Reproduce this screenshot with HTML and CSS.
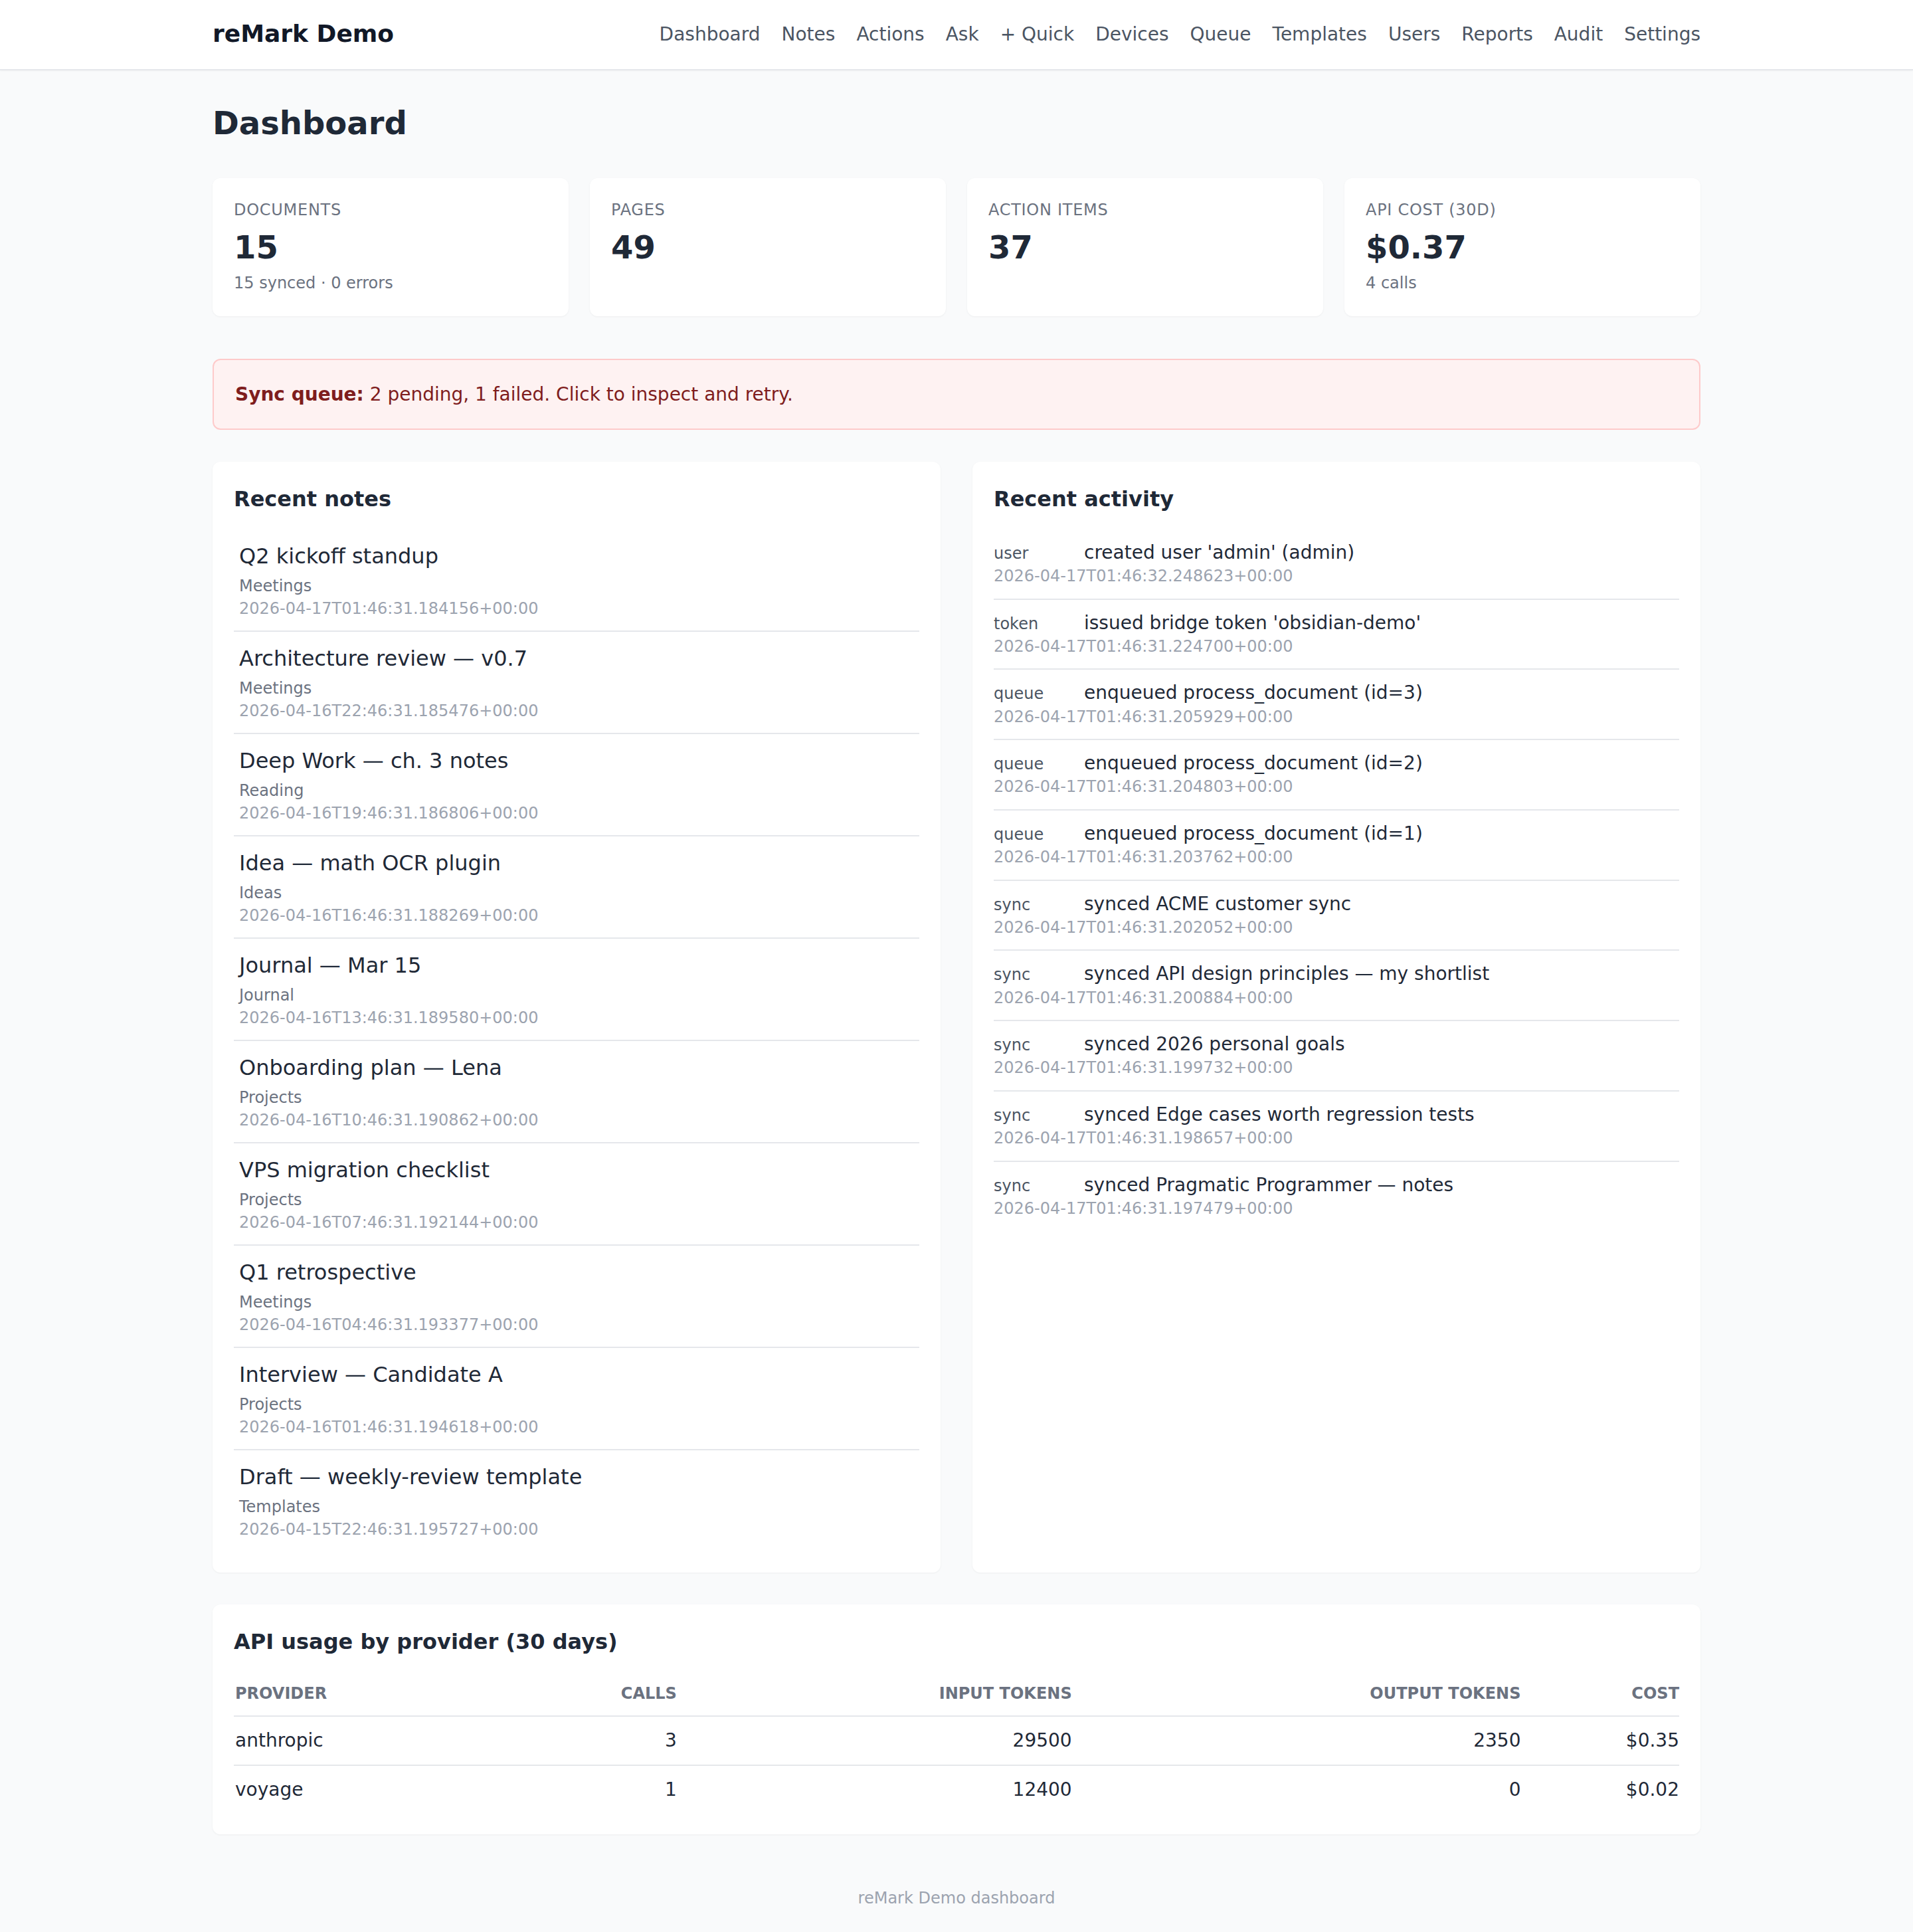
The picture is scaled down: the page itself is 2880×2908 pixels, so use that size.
FILE: index.html
```html
<!DOCTYPE html>
<html lang="en">
<head>
    <meta charset="UTF-8">
    <meta name="viewport" content="width=device-width, initial-scale=1.0">
    <title>reMark Demo — Dashboard</title>
    <link rel="stylesheet" href="styles.css">
</head>
<body>

<header class="topbar">
    <div class="topbar-inner">
        <a href="#" class="brand">reMark Demo</a>
        <nav class="nav">
            <a href="#">Dashboard</a>
            <a href="#">Notes</a>
            <a href="#">Actions</a>
            <a href="#">Ask</a>
            <a href="#">+ Quick</a>
            <a href="#">Devices</a>
            <a href="#">Queue</a>
            <a href="#">Templates</a>
            <a href="#">Users</a>
            <a href="#">Reports</a>
            <a href="#">Audit</a>
            <a href="#">Settings</a>
        </nav>
    </div>
</header>

<main class="page">
    <h1>Dashboard</h1>

    <div class="stats">
        <div class="card stat">
            <div class="stat-label">Documents</div>
            <div class="stat-value">15</div>
            <div class="stat-sub">15 synced · 0 errors</div>
        </div>
        <div class="card stat">
            <div class="stat-label">Pages</div>
            <div class="stat-value">49</div>
        </div>
        <div class="card stat">
            <div class="stat-label">Action items</div>
            <div class="stat-value">37</div>
        </div>
        <div class="card stat">
            <div class="stat-label">API cost (30d)</div>
            <div class="stat-value">$0.37</div>
            <div class="stat-sub">4 calls</div>
        </div>
    </div>

    <a href="#" class="alert"><strong>Sync queue:</strong> 2 pending, 1 failed. Click to inspect and retry.</a>

    <div class="columns">
        <section class="card">
            <h2>Recent notes</h2>
            <ul class="notes">
                <li><a href="#" class="note-title">Q2 kickoff standup</a><div class="note-cat">Meetings</div><div class="note-date">2026-04-17T01:46:31.184156+00:00</div></li>
                <li><a href="#" class="note-title">Architecture review — v0.7</a><div class="note-cat">Meetings</div><div class="note-date">2026-04-16T22:46:31.185476+00:00</div></li>
                <li><a href="#" class="note-title">Deep Work — ch. 3 notes</a><div class="note-cat">Reading</div><div class="note-date">2026-04-16T19:46:31.186806+00:00</div></li>
                <li><a href="#" class="note-title">Idea — math OCR plugin</a><div class="note-cat">Ideas</div><div class="note-date">2026-04-16T16:46:31.188269+00:00</div></li>
                <li><a href="#" class="note-title">Journal — Mar 15</a><div class="note-cat">Journal</div><div class="note-date">2026-04-16T13:46:31.189580+00:00</div></li>
                <li><a href="#" class="note-title">Onboarding plan — Lena</a><div class="note-cat">Projects</div><div class="note-date">2026-04-16T10:46:31.190862+00:00</div></li>
                <li><a href="#" class="note-title">VPS migration checklist</a><div class="note-cat">Projects</div><div class="note-date">2026-04-16T07:46:31.192144+00:00</div></li>
                <li><a href="#" class="note-title">Q1 retrospective</a><div class="note-cat">Meetings</div><div class="note-date">2026-04-16T04:46:31.193377+00:00</div></li>
                <li><a href="#" class="note-title">Interview — Candidate A</a><div class="note-cat">Projects</div><div class="note-date">2026-04-16T01:46:31.194618+00:00</div></li>
                <li><a href="#" class="note-title">Draft — weekly-review template</a><div class="note-cat">Templates</div><div class="note-date">2026-04-15T22:46:31.195727+00:00</div></li>
            </ul>
        </section>

        <section class="card">
            <h2>Recent activity</h2>
            <ul class="activity">
                <li><div class="act-line"><span class="act-kind">user</span><span class="act-text">created user 'admin' (admin)</span></div><div class="act-date">2026-04-17T01:46:32.248623+00:00</div></li>
                <li><div class="act-line"><span class="act-kind">token</span><span class="act-text">issued bridge token 'obsidian-demo'</span></div><div class="act-date">2026-04-17T01:46:31.224700+00:00</div></li>
                <li><div class="act-line"><span class="act-kind">queue</span><span class="act-text">enqueued process_document (id=3)</span></div><div class="act-date">2026-04-17T01:46:31.205929+00:00</div></li>
                <li><div class="act-line"><span class="act-kind">queue</span><span class="act-text">enqueued process_document (id=2)</span></div><div class="act-date">2026-04-17T01:46:31.204803+00:00</div></li>
                <li><div class="act-line"><span class="act-kind">queue</span><span class="act-text">enqueued process_document (id=1)</span></div><div class="act-date">2026-04-17T01:46:31.203762+00:00</div></li>
                <li><div class="act-line"><span class="act-kind">sync</span><span class="act-text">synced ACME customer sync</span></div><div class="act-date">2026-04-17T01:46:31.202052+00:00</div></li>
                <li><div class="act-line"><span class="act-kind">sync</span><span class="act-text">synced API design principles — my shortlist</span></div><div class="act-date">2026-04-17T01:46:31.200884+00:00</div></li>
                <li><div class="act-line"><span class="act-kind">sync</span><span class="act-text">synced 2026 personal goals</span></div><div class="act-date">2026-04-17T01:46:31.199732+00:00</div></li>
                <li><div class="act-line"><span class="act-kind">sync</span><span class="act-text">synced Edge cases worth regression tests</span></div><div class="act-date">2026-04-17T01:46:31.198657+00:00</div></li>
                <li><div class="act-line"><span class="act-kind">sync</span><span class="act-text">synced Pragmatic Programmer — notes</span></div><div class="act-date">2026-04-17T01:46:31.197479+00:00</div></li>
            </ul>
        </section>
    </div>

    <section class="card">
        <h2>API usage by provider (30 days)</h2>
        <table class="usage">
            <thead>
                <tr>
                    <th>Provider</th>
                    <th class="num">Calls</th>
                    <th class="num">Input tokens</th>
                    <th class="num">Output tokens</th>
                    <th class="num">Cost</th>
                </tr>
            </thead>
            <tbody>
                <tr>
                    <td>anthropic</td>
                    <td class="num">3</td>
                    <td class="num">29500</td>
                    <td class="num">2350</td>
                    <td class="num">$0.35</td>
                </tr>
                <tr>
                    <td>voyage</td>
                    <td class="num">1</td>
                    <td class="num">12400</td>
                    <td class="num">0</td>
                    <td class="num">$0.02</td>
                </tr>
            </tbody>
        </table>
    </section>
</main>

<footer class="footer">reMark Demo dashboard</footer>

</body>
</html>
```

FILE: styles.css
```css
/* sizes are doubled: the page is shot at 2880px wide */
body {
    margin: 0;
    background-color: #f9fafb;
    color: #1f2937;
    font-family: "DejaVu Sans", "Noto Sans", sans-serif;
    font-size: 28px;
    line-height: 1.4;
}
a {
    color: inherit;
    text-decoration: none;
}

.topbar {
    background-color: white;
    border-bottom: 2px solid #e5e7eb;
    box-shadow: 0 1px 3px rgba(0, 0, 0, 0.04);
}
.topbar-inner {
    max-width: 2240px;
    height: 104px;
    margin: 0 auto;
    display: flex;
    align-items: center;
    justify-content: space-between;
}
.brand {
    font-size: 36px;
    font-weight: bold;
    color: #111827;
    margin-top: -2px;
}
.nav {
    display: flex;
    gap: 32px;
}
.nav a {
    color: #4b5563;
}

.page {
    max-width: 2240px;
    margin: 0 auto;
    padding-top: 48px;
}
h1 {
    font-size: 48px;
    line-height: 1.3;
    margin: 0 0 52px;
    color: #1f2937;
}
h2 {
    font-size: 32px;
    line-height: 1.5;
    margin: 0 0 22px;
    color: #1f2937;
}

.card {
    background-color: white;
    border-radius: 12px;
    padding: 32px;
    box-shadow: 0 1px 3px rgba(0, 0, 0, 0.05);
}

.stats {
    display: grid;
    grid-template-columns: repeat(4, 1fr);
    gap: 32px;
    margin-bottom: 64px;
}
.stat-label {
    font-size: 24px;
    text-transform: uppercase;
    letter-spacing: 0.03em;
    color: #6b7280;
}
.stat-value {
    font-size: 48px;
    font-weight: bold;
    line-height: 1.25;
    margin: 8px 0;
    color: #1f2937;
}
.stat-sub {
    font-size: 24px;
    color: #6b7280;
}

.alert {
    display: block;
    background-color: #fef2f2;
    border: 2px solid #fecaca;
    border-radius: 12px;
    padding: 32px;
    color: #7f1d1d;
    margin-bottom: 48px;
}

.columns {
    display: grid;
    grid-template-columns: 1fr 1fr;
    gap: 48px;
    margin-bottom: 48px;
}

.notes, .activity {
    list-style: none;
    margin: 0;
    padding: 0;
}
.notes li {
    padding: 16px 8px;
    border-bottom: 2px solid #e5e7eb;
}
.notes li:last-child, .activity li:last-child {
    border-bottom: none;
}
.note-title {
    display: block;
    font-size: 32px;
    line-height: 48px;
    color: #1f2937;
}
.note-cat {
    font-size: 24px;
    line-height: 34px;
    margin-top: 4px;
    color: #6b7280;
}
.note-date {
    font-size: 24px;
    line-height: 34px;
    color: #9ca3af;
}

.activity li {
    padding: 15px 0 16px;
    border-bottom: 2px solid #e5e7eb;
}
.act-line {
    display: flex;
    align-items: baseline;
}
.act-kind {
    flex: none;
    width: 120px;
    margin-right: 16px;
    font-size: 24px;
    color: #4b5563;
}
.act-date {
    font-size: 24px;
    color: #9ca3af;
}

.usage {
    width: 100%;
    margin-top: 4px;
    border-collapse: collapse;
}
.usage th {
    font-size: 24px;
    text-transform: uppercase;
    text-align: left;
    color: #6b7280;
    padding: 16px 0;
    border-bottom: 2px solid #e5e7eb;
}
.usage td {
    padding: 16px 0;
    border-bottom: 2px solid #e5e7eb;
}
.usage tbody tr:last-child td {
    border-bottom: none;
}
.usage th:first-child, .usage td:first-child {
    padding-left: 2px;
}
.usage .num {
    text-align: right;
}

.footer {
    margin-top: 48px;
    padding: 32px 0;
    text-align: center;
    font-size: 24px;
    color: #9ca3af;
}
```
